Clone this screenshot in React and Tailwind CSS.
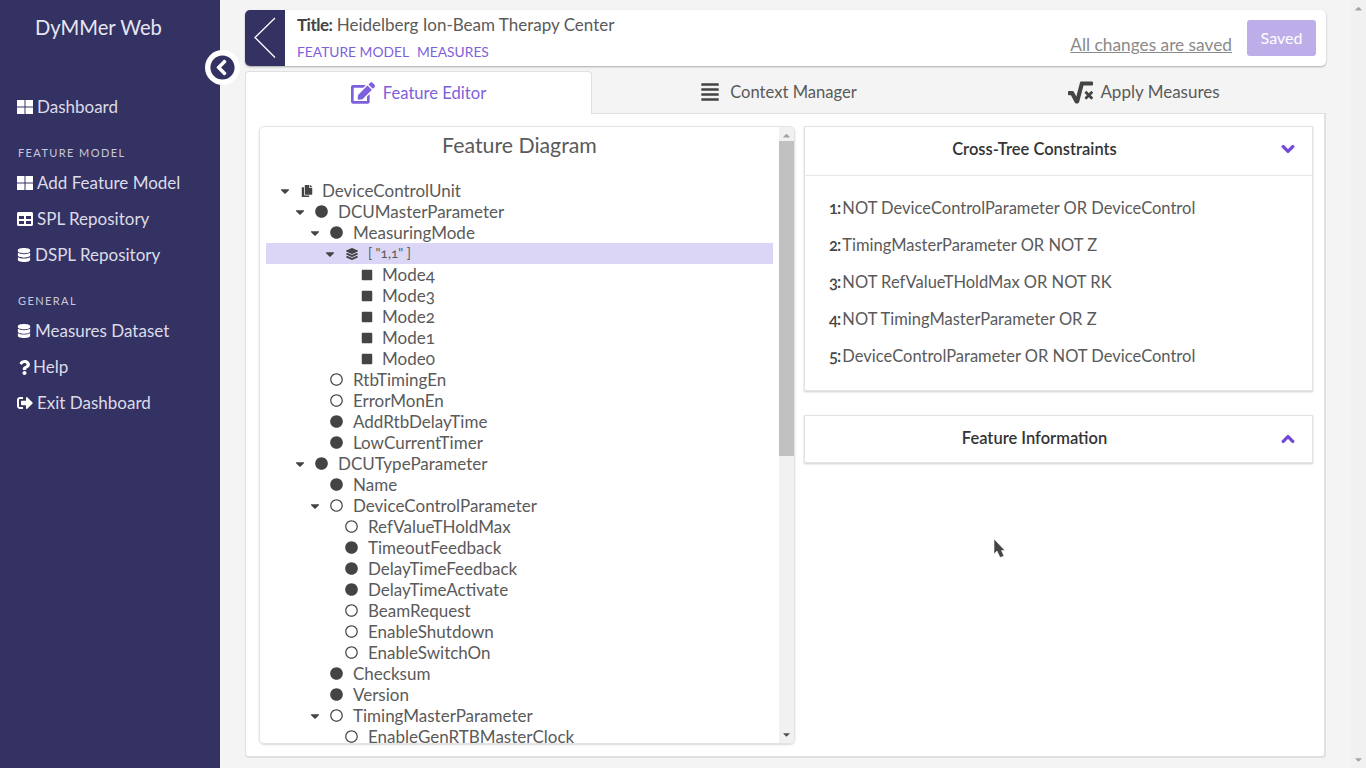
import { FaTable, FaDatabase, FaQuestion, FaSignOutAlt, FaEdit, FaAlignJustify, FaSquareRootAlt, FaChevronCircleLeft, FaChevronDown, FaChevronUp, FaCaretDown, FaCaretUp, FaLayerGroup, FaCopy, FaCircle, FaRegCircle, FaSquare } from "react-icons/fa";

const tree = [
  [0, "root", "DeviceControlUnit", true],
  [1, "on", "DCUMasterParameter", true],
  [2, "on", "MeasuringMode", true],
  [3, "group", "[ \"1,1\" ]", true],
  [4, "square", "Mode4"],
  [4, "square", "Mode3"],
  [4, "square", "Mode2"],
  [4, "square", "Mode1"],
  [4, "square", "Mode0"],
  [2, "off", "RtbTimingEn"],
  [2, "off", "ErrorMonEn"],
  [2, "on", "AddRtbDelayTime"],
  [2, "on", "LowCurrentTimer"],
  [1, "on", "DCUTypeParameter", true],
  [2, "on", "Name"],
  [2, "off", "DeviceControlParameter", true],
  [3, "off", "RefValueTHoldMax"],
  [3, "on", "TimeoutFeedback"],
  [3, "on", "DelayTimeFeedback"],
  [3, "on", "DelayTimeActivate"],
  [3, "off", "BeamRequest"],
  [3, "off", "EnableShutdown"],
  [3, "off", "EnableSwitchOn"],
  [2, "on", "Checksum"],
  [2, "on", "Version"],
  [2, "off", "TimingMasterParameter", true],
  [3, "off", "EnableGenRTBMasterClock"],
];

const constraints = [
  "NOT DeviceControlParameter OR DeviceControl",
  "TimingMasterParameter OR NOT Z",
  "NOT RefValueTHoldMax OR NOT RK",
  "NOT TimingMasterParameter OR Z",
  "DeviceControlParameter OR NOT DeviceControl",
];

// FA4 th-large has square corners, the FA5 one in react-icons is rounded
function GridIcon({ size = 16, className }) {
  return (
    <svg width={size} height={size} viewBox="0 0 16 16" fill="currentColor" className={className}>
      <rect x="0" y="1" width="7.5" height="6.5" />
      <rect x="8.5" y="1" width="7.5" height="6.5" />
      <rect x="0" y="8.5" width="7.5" height="6.5" />
      <rect x="8.5" y="8.5" width="7.5" height="6.5" />
    </svg>
  );
}

function NavItem({ icon: Icon, label, size = 16, gap = "gap-1" }) {
  return (
    <a className={`flex h-9 items-center pl-[17px] text-[17px] text-[#dcdbe8] ${gap}`}>
      <Icon size={size} className="shrink-0 text-white" />
      <span>{label}</span>
    </a>
  );
}

function NodeIcon({ type }) {
  if (type === "root") return <FaCopy size={12} />;
  if (type === "group") return <FaLayerGroup size={12} />;
  if (type === "on") return <FaCircle size={13} />;
  if (type === "off") return <FaRegCircle size={13} />;
  return <FaSquare size={12} />;
}

function TreeRow({ level, type, label, open }) {
  const selected = type === "group";
  return (
    <div className={`flex h-[21px] items-center ${selected ? "bg-[#dbd6f5]" : ""}`}>
      <div style={{ width: level * 15 + 26 }} className="flex shrink-0 justify-end">
        {open && <FaCaretDown size={14} className="text-[#444]" />}
      </div>
      <div className="flex w-[29px] shrink-0 justify-center text-[#444]">
        <NodeIcon type={type} />
      </div>
      <span className={`whitespace-nowrap ${level % 4 ? "ml-[2px]" : "ml-px"} ${selected ? "text-[13.5px]" : "text-[17px]"}`}>{label}</span>
    </div>
  );
}

function Scrollbar({ thumb, down = "text-[#505050]" }) {
  return (
    <div className="flex w-[15px] shrink-0 flex-col items-center bg-[#f1f1f1]">
      <FaCaretUp size={11} className="mt-[3px] shrink-0 text-[#a3a3a3]" />
      {thumb && <div className="h-[315px] w-full bg-[#c1c1c1]" />}
      <FaCaretDown size={11} className={`mt-auto mb-[3px] shrink-0 ${down}`} />
    </div>
  );
}

export default function App() {
  return (
    <div className="relative flex h-screen overflow-hidden bg-[#f4f4f4] font-['Lato','Liberation_Sans',sans-serif] text-[#5a5a5a] oldstyle-nums">
      <aside className="relative w-[220px] shrink-0 bg-[#343263]">
        <h1 className="mt-[14px] pl-[35px] text-[20.2px] leading-[26px] text-[#e6e6f0]">DyMMer Web</h1>
        <button className="absolute top-[50px] left-[205px] flex h-[35px] w-[35px] items-center justify-center rounded-full bg-white">
          <FaChevronCircleLeft size={25} className="text-[#343263]" />
        </button>
        <nav className="mt-[49px]">
          <NavItem icon={GridIcon} label="Dashboard" />
          <p className="mt-[20px] mb-[4px] pl-[18px] text-[11px] leading-4 tracking-[1.4px] text-[#c9c8da]">FEATURE MODEL</p>
          <NavItem icon={GridIcon} label="Add Feature Model" />
          <NavItem icon={FaTable} label="SPL Repository" />
          <NavItem icon={FaDatabase} size={14} label="DSPL Repository" />
          <p className="mt-[20px] mb-[4px] pl-[18px] text-[11px] leading-4 tracking-[1.4px] text-[#c9c8da]">GENERAL</p>
          <NavItem icon={FaDatabase} size={14} label="Measures Dataset" />
          <NavItem icon={FaQuestion} size={15} gap="gap-px" label="Help" />
          <NavItem icon={FaSignOutAlt} label="Exit Dashboard" />
        </nav>
      </aside>

      <main className="flex min-w-0 flex-1 flex-col pt-[10px] pr-[25px] pl-[25px]">
        <header className="flex h-[56px] shrink-0 overflow-hidden rounded-[5px] bg-white shadow-[0_1px_2px_rgba(0,0,0,0.3)]">
          <div className="flex w-[40px] shrink-0 items-center justify-center bg-[#343263]">
            <svg width="22" height="42" viewBox="0 0 22 42" fill="none" stroke="white" strokeWidth="1.3">
              <path d="M21 1 1 20.5 21 40.5" />
            </svg>
          </div>
          <div className="flex min-w-0 flex-1 flex-col pl-[12px]">
            <p className="mt-[4px] text-[17px] leading-[22px]"><b className="font-bold tracking-[-0.5px] text-[#444]">Title:</b> Heidelberg Ion-Beam Therapy Center</p>
            <div className="mt-[8px] flex gap-[8px] text-[13.8px] leading-[16px] text-[#7e5fdc]">
              <span>FEATURE MODEL</span>
              <span>MEASURES</span>
            </div>
          </div>
          <div className="flex items-center gap-[15px] pr-[10px]">
            <span className="mt-[14px] text-[17.3px] text-[#8a8a8a] underline">All changes are saved</span>
            <button className="h-[36px] w-[69px] rounded-[3px] bg-[#bdaeea] text-[16px] text-white">Saved</button>
          </div>
        </header>

        <div className="mt-[5px] flex h-[42px] shrink-0 text-[16.6px]">
          <div className="z-10 -mb-px flex w-[347px] items-center justify-center gap-[8px] rounded-t-[4px] border border-b-0 border-[#e0e0e0] bg-white text-[#7e5fdc]">
            <FaEdit size={24} />
            <span>Feature Editor</span>
          </div>
          <div className="flex w-[373px] items-center justify-center gap-[10px]">
            <FaAlignJustify size={20} className="text-[#444]" />
            <span>Context Manager</span>
          </div>
          <div className="flex flex-1 items-center justify-center gap-[7px] pr-[3px] text-[17px]">
            <FaSquareRootAlt size={25} className="text-[#444]" />
            <span>Apply Measures</span>
          </div>
        </div>

        <section className="flex h-[645px] shrink-0 gap-[9px] rounded-b-[4px] border-r-2 border-b-2 border-l border-[#e0e0e0] bg-white pt-[13px] pr-[11px] pl-[13px] shadow-[inset_0_1px_0_#e0e0e0]">
          <div className="flex h-[618px] w-[536px] shrink-0 overflow-hidden rounded-[5px] border border-[#e3e3e3] shadow-[0_1px_2px_rgba(0,0,0,0.15)]">
            <div className="min-w-0 flex-1 overflow-hidden">
              <h2 className="mt-[5px] text-center text-[21.3px] leading-[26px]">Feature Diagram</h2>
              <div className="mt-[22px] pr-[6px] pl-[6px]">
                {tree.map(([level, type, label, open]) => (
                  <TreeRow key={label} level={level} type={type} label={label} open={open} />
                ))}
              </div>
            </div>
            <Scrollbar thumb />
          </div>

          <div className="flex min-w-0 flex-1 flex-col">
            <div className="h-[265px] border border-[#e3e3e3] shadow-[0_1px_2px_rgba(0,0,0,0.2)]">
              <div className="relative flex h-[49px] items-center justify-center border-b border-[#e8e8e8] pr-[48px] pb-[4px]">
                <h3 className="text-[16.5px] font-semibold text-[#333]">Cross-Tree Constraints</h3>
                <FaChevronDown size={14} stroke="currentColor" strokeWidth={40} className="absolute right-[17px] text-[#7048d8]" />
              </div>
              <ol className="pt-[14px] pl-[24px]">
                {constraints.map((text, i) => (
                  <li key={text} className="h-[37px] text-[16.5px] leading-[37px]">
                    <b className="font-semibold tracking-[-1px] text-[#444]">{i + 1}:</b> <span className="-ml-[2px]">{text}</span>
                  </li>
                ))}
              </ol>
            </div>
            <div className="relative mt-[24px] flex h-[48px] items-center justify-center border border-[#e3e3e3] pr-[48px] pb-px shadow-[0_1px_2px_rgba(0,0,0,0.2)]">
              <h3 className="text-[16.5px] font-semibold text-[#333]">Feature Information</h3>
              <FaChevronUp size={14} stroke="currentColor" strokeWidth={40} className="absolute right-[17px] text-[#7048d8]" />
            </div>
          </div>
        </section>
      </main>

      <Scrollbar down="text-[#a3a3a3]" />

      {/* mouse pointer caught in the screenshot */}
      <svg width="13" height="21" viewBox="0 0 13 21" className="absolute top-[538px] left-[993px]">
        <path d="M1 1V16L4 13 7 19.5 11 18 8.5 12.5H12Z" fill="#444" stroke="#fff" strokeWidth="0.6" />
      </svg>
    </div>
  );
}
